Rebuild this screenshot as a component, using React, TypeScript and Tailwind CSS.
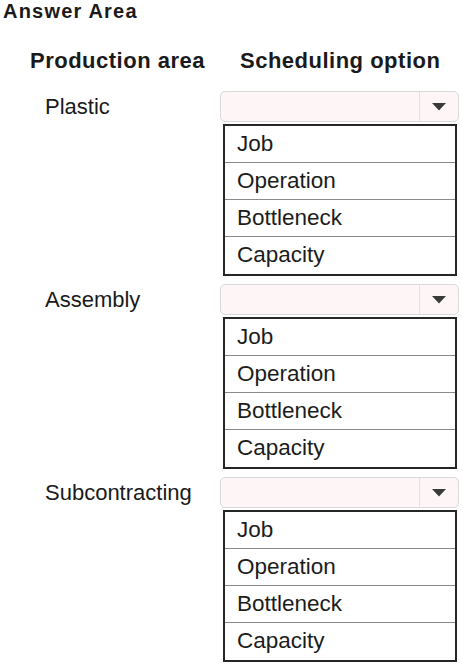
const areas = ["Plastic", "Assembly", "Subcontracting"];
const options = ["Job", "Operation", "Bottleneck", "Capacity"];

const SelectBox = () => (
  <div className="flex h-[31px] w-[239px] rounded-[5px] border border-[#d9d9d9] bg-[#fdf5f6]">
    <div className="flex-1" />
    <div className="flex w-[39px] items-center justify-center border-l border-[#e2e2e2]">
      <svg width="14" height="8" viewBox="0 0 14 8">
        <path d="M0 0 H14 L7 7.5 Z" fill="#3a3a3a" />
      </svg>
    </div>
  </div>
);

const OptionList = () => (
  <div className="ml-[3px] mt-[2px] w-[234px] border-2 border-[#262626] bg-white">
    {options.map((option, i) => (
      <div
        key={option}
        className={`flex h-[37px] items-center pl-[12px] text-[22.5px] leading-none text-[#1c1c1c] ${
          i < options.length - 1 ? "border-b border-[#8a8a8a]" : ""
        }`}
      >
        {option}
      </div>
    ))}
  </div>
);

export default function App() {
  return (
    <div className="h-[664px] w-[463px] overflow-hidden bg-white font-['Liberation_Sans',Arial,sans-serif] text-[#1a1a1a]">
      <div className="pl-[3px] text-[20px] font-bold leading-[22px] tracking-[1.2px]">Answer Area</div>

      <div className="mt-[26px] flex h-[26px] items-center text-[22px] font-bold leading-none tracking-[0.5px]">
        <div className="w-[240px] pl-[30px]">Production area</div>
        <div>Scheduling option</div>
      </div>

      <div className="mt-[17px]">
        {areas.map((area) => (
          <div key={area} className="mb-[8px] flex">
            <div className="flex h-[31px] w-[220px] items-center pl-[45px] text-[22px] leading-none">{area}</div>
            <div>
              <SelectBox />
              <OptionList />
            </div>
          </div>
        ))}
      </div>
    </div>
  );
}
